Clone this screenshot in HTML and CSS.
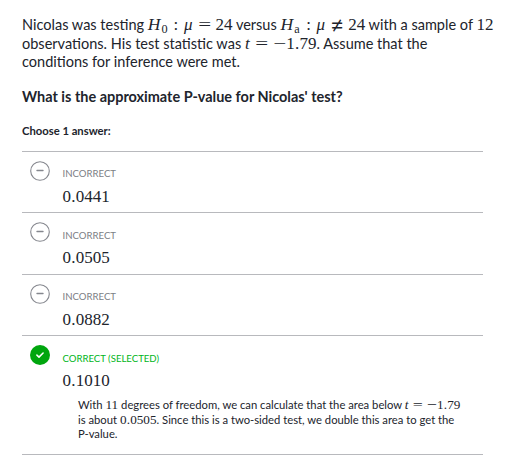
FILE: index.html
```html
<!DOCTYPE html>
<html lang="en">
<head>
<meta charset="utf-8">
<title>P-value exercise</title>
<link rel="stylesheet" href="styles.css">
</head>
<body>
<main class="exercise">
  <p class="prompt">Nicolas was testing <span class="math hyp"><i class="h">H</i><span class="sub">0</span><span class="colon">:</span><i class="mu">μ</i><span class="rel"><span>=</span></span>24</span> versus <span class="math hyp"><i class="h">H</i><span class="sub">a</span><span class="colon">:</span><i class="mu">μ</i><span class="rel neq"><span>≠</span></span>24</span> with a sample of <span class="math">12</span><br>observations. His test statistic was <span class="math stat"><i class="t">t</i><span class="rel"><span>=</span></span><span class="minus"><span>−</span></span>1<span class="dot">.</span>79</span>. Assume that the<br>conditions for inference were met.</p>
  <h1 class="question">What is the approximate P-value for Nicolas' test?</h1>
  <h2 class="instruction">Choose 1 answer:</h2>
  <ul class="choices">
    <li class="choice">
      <svg class="icon" viewBox="0 0 20 20"><circle cx="10" cy="10" r="9.3"/><path d="M7 9.5h6"/></svg>
      <div class="body"><div class="status">INCORRECT</div><div class="math answer">0<span class="dot">.</span>0441</div></div>
    </li>
    <li class="choice">
      <svg class="icon" viewBox="0 0 20 20"><circle cx="10" cy="10" r="9.3"/><path d="M7 9.5h6"/></svg>
      <div class="body"><div class="status">INCORRECT</div><div class="math answer">0<span class="dot">.</span>0505</div></div>
    </li>
    <li class="choice">
      <svg class="icon" viewBox="0 0 20 20"><circle cx="10" cy="10" r="9.3"/><path d="M7 9.5h6"/></svg>
      <div class="body"><div class="status">INCORRECT</div><div class="math answer">0<span class="dot">.</span>0882</div></div>
    </li>
    <li class="choice correct">
      <svg class="icon" viewBox="0 0 20 20"><circle cx="10" cy="10" r="10"/><path d="M6.9 10.1l2.1 2 4.1-4.1"/></svg>
      <div class="body"><div class="status">CORRECT (SELECTED)</div><div class="math answer">0<span class="dot">.</span>1010</div>
        <p class="rationale">With <span class="math">11</span> degrees of freedom, we can calculate that the area below <span class="math"><i class="t">t</i><span class="rel"><span>=</span></span><span class="minus"><span>−</span></span>1<span class="dot">.</span>79</span><br>is about <span class="math">0<span class="dot">.</span>0505</span>. Since this is a two-sided test, we double this area to get the<br>P-value.</p>
      </div>
    </li>
  </ul>
</main>
</body>
</html>
```
FILE: styles.css
```css
* { box-sizing: border-box; }
body { margin: 0; background: #fff; color: #21242c; font-family: Lato, sans-serif; }
.exercise { width: 483px; padding: 16px 0 0 22px; }
.prompt { margin: 0; font-size: 14.52px; line-height: 18.6px; white-space: nowrap; }
.question { margin: 15.2px 0 0; font-size: 14.46px; line-height: 20px; font-weight: 700; white-space: nowrap; }
.instruction { margin: 16px 0 0; font-size: 11.25px; line-height: 16px; font-weight: 700; }
.choices { list-style: none; margin: 12px 0 0; padding: 0; width: 461px; border-top: 1px solid #b8b9bd; }
.choice { display: flex; height: 61.4px; border-bottom: 1px solid #b8b9bd; padding: 9px 0 0 8px; }
.choice.correct { height: 119px; }
.icon { width: 20px; height: 20px; flex: none; fill: none; stroke: #85878e; stroke-width: 1.1; margin-right: 12.5px; }
.icon path { stroke-width: 1.4; stroke-linecap: round; }
.correct .icon circle { fill: #00a60e; stroke: none; }
.correct .icon path { stroke: #fff; stroke-width: 1.5; stroke-linejoin: round; }
.status { margin-top: 6.4px; font-size: 9.6px; line-height: 14px; color: #7c7e84; }
.correct .status { color: #00b51b; }
.math { font-family: "Liberation Serif", serif; font-size: 17px; line-height: 1px; white-space: nowrap; }
.answer { line-height: 20px; margin-top: 5.6px; }
.math span, .math i { display: inline-block; }
.dot { width: .278em; text-align: center; }
.h { width: .79em; font-size: 17.5px; }
.sub { font-size: .72em; width: .6em; transform: translateY(.22em); }
.colon { width: .82em; text-align: center; }
.mu { width: .62em; text-align: center; }
.rel { width: 1.3em; text-align: center; }
.rel > span, .minus > span { transform: scaleX(1.35); }
.neq > span { font-family: "DejaVu Serif", serif; font-size: 16px; transform: scaleY(1.3); }
.minus { width: .78em; text-align: center; }
.t { width: .36em; }
.rationale { margin: 6.8px 0 0 15.5px; font-size: 11.25px; line-height: 14.7px; white-space: nowrap; }
.rationale .math { font-size: 13.2px; }
```
